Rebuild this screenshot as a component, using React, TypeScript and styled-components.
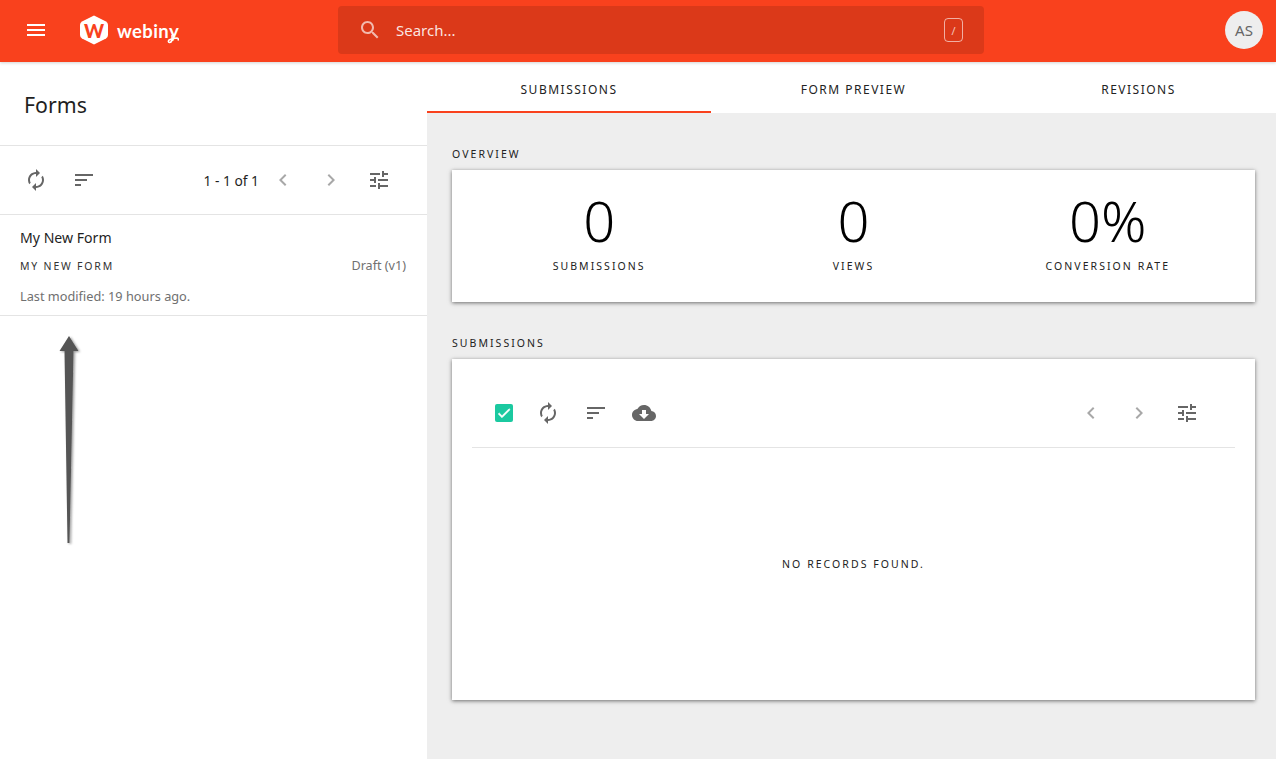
import { createGlobalStyle, styled } from "styled-components";

const GlobalStyle = createGlobalStyle`
  html, body { margin: 0; padding: 0; height: 100%; }
  body {
    background: #fff;
    color: #1a1a1a;
    font-family: "Noto Sans", "Open Sans", sans-serif;
    overflow: hidden;
  }
`;

const ICONS = {
  menu: "M3 18h18v-2H3v2zm0-5h18v-2H3v2zm0-7v2h18V6H3z",
  search:
    "M15.5 14h-.79l-.28-.27C15.41 12.59 16 11.11 16 9.5 16 5.91 13.09 3 9.5 3S3 5.91 3 9.5 5.91 16 9.5 16c1.61 0 3.09-.59 4.23-1.57l.27.28v.79l5 4.99L20.49 19l-4.99-5zm-6 0C7.01 14 5 11.99 5 9.5S7.01 5 9.5 5 14 7.01 14 9.5 11.99 14 9.5 14z",
  loop: "M12 6v3l4-4-4-4v3c-4.42 0-8 3.58-8 8 0 1.57.46 3.03 1.24 4.26L6.7 14.8c-.45-.83-.7-1.79-.7-2.8 0-3.31 2.69-6 6-6zm6.76 1.74L17.3 9.2c.44.84.7 1.79.7 2.8 0 3.31-2.69 6-6 6v-3l-4 4 4 4v-3c4.42 0 8-3.58 8-8 0-1.57-.46-3.03-1.24-4.26z",
  sort: "M3 18h6v-2H3v2zM3 6v2h18V6H3zm0 7h12v-2H3v2z",
  tune: "M3 17v2h6v-2H3zM3 5v2h10V5H3zm10 16v-2h8v-2h-8v-2h-2v6h2zM7 9v2H3v2h4v2h2V9H7zm14 4v-2H11v2h10zm-6-4h2V7h4V5h-4V3h-2v6z",
  left: "M15.41 7.41L14 6l-6 6 6 6 1.41-1.41L10.83 12z",
  right: "M10 6L8.59 7.41 13.17 12l-4.58 4.59L10 18l6-6z",
  cloud:
    "M19.35 10.04C18.67 6.59 15.64 4 12 4 9.11 4 6.6 5.64 5.35 8.04 2.34 8.36 0 10.91 0 14c0 3.31 2.69 6 6 6h13c2.76 0 5-2.24 5-5 0-2.64-2.05-4.78-4.65-4.96zM17 13l-5 5-5-5h3V9h4v4h3z",
  check: "M9 16.17L4.83 12l-1.42 1.41L9 19 21 7l-1.41-1.41z",
};

type IconName = keyof typeof ICONS;

const Icon = ({ name, className }: { name: IconName; className?: string }) => (
  <svg className={className} viewBox="0 0 24 24" width="24" height="24" fill="currentColor">
    <path d={ICONS[name]} />
  </svg>
);

const Page = styled.div`
  position: relative;
  width: 1276px;
  height: 759px;
  display: flex;
  flex-direction: column;
  overflow: hidden;
`;

const Header = styled.header`
  height: 62px;
  flex: none;
  box-sizing: border-box;
  padding-bottom: 2px;
  background: #f9411d;
  box-shadow: 0 1px 3px rgba(0, 0, 0, 0.18);
  position: relative;
  z-index: 2;
  display: flex;
  align-items: center;
  color: #fff;
`;

const MenuButton = styled.div`
  width: 24px;
  height: 24px;
  margin-left: 24px;
  display: flex;
`;

const Logo = styled.div`
  margin-left: 32px;
  width: 258px;
  display: flex;
  align-items: center;
  gap: 9px;
`;

const Hexagon = styled.div`
  position: relative;
  width: 28px;
  height: 30px;
  display: flex;
  align-items: center;
  justify-content: center;
  color: #f9411d;
  font-family: "Lato", sans-serif;
  font-size: 19px;
  font-weight: 900;
  line-height: 1;
  svg {
    position: absolute;
    inset: 0;
  }
  span {
    position: relative;
  }
`;

const LogoWord = styled.div`
  position: relative;
  font-family: "Lato", sans-serif;
  font-size: 18.5px;
  font-weight: 700;
  letter-spacing: 0.4px;
  line-height: 1;
  margin-top: 2px;
  svg {
    position: absolute;
    left: 46px;
    top: 10px;
  }
`;

const SearchBar = styled.div`
  width: 646px;
  height: 48px;
  background: #db3919;
  border-radius: 4px;
  display: flex;
  align-items: center;
  padding: 0 21px 0 20px;
  box-sizing: border-box;
  color: rgba(255, 255, 255, 0.65);
`;

const SearchText = styled.div`
  flex: 1;
  margin-left: 14px;
  font-size: 15px;
  color: rgba(255, 255, 255, 0.88);
`;

const SlashKey = styled.div`
  width: 19px;
  height: 24px;
  box-sizing: border-box;
  border: 1px solid rgba(255, 255, 255, 0.6);
  border-radius: 4px;
  display: flex;
  align-items: center;
  justify-content: center;
  font-size: 11px;
  color: rgba(255, 255, 255, 0.7);
`;

const Avatar = styled.div`
  margin-left: auto;
  margin-right: 13px;
  width: 38px;
  height: 38px;
  border-radius: 50%;
  background: #eee;
  color: #666;
  font-size: 15px;
  display: flex;
  align-items: center;
  justify-content: center;
`;

const Body = styled.div`
  flex: 1;
  display: flex;
  min-height: 0;
`;

const Sidebar = styled.aside`
  width: 427px;
  flex: none;
  background: #fff;
`;

const SidebarTitle = styled.div`
  height: 84px;
  box-sizing: border-box;
  padding: 2px 0 0 24px;
  display: flex;
  align-items: center;
  font-size: 21.3px;
  color: #1f1f1f;
  border-bottom: 1px solid #e4e4e4;
`;

const Toolbar = styled.div`
  height: 69px;
  box-sizing: border-box;
  display: flex;
  align-items: center;
  padding-left: 24px;
  border-bottom: 1px solid #e4e4e4;
`;

const ToolIcon = styled(Icon)<{ $muted?: boolean }>`
  flex: none;
  color: ${({ $muted }) => ($muted ? "#a8a8a8" : "#666")};
`;

const ToolGroup = styled.div<{ $gap: number }>`
  display: flex;
  align-items: center;
  gap: ${({ $gap }) => $gap}px;
`;

const Pager = styled.div`
  margin-left: auto;
  margin-right: 36px;
  display: flex;
  align-items: center;
  font-size: 13.8px;
  color: #1f1f1f;
  gap: 12px;
`;

const ListItem = styled.div`
  height: 101px;
  box-sizing: border-box;
  padding: 13px 21px 0 20px;
  border-bottom: 1px solid #e4e4e4;
`;

const ItemTitle = styled.div`
  font-size: 14.1px;
  line-height: 20px;
  color: #1f1f1f;
`;

const ItemMeta = styled.div`
  margin-top: 8px;
  display: flex;
  justify-content: space-between;
  align-items: center;
  line-height: 20px;
`;

const Slug = styled.div`
  font-size: 10.5px;
  letter-spacing: 1.8px;
  text-transform: uppercase;
  color: #333;
`;

const MutedText = styled.div`
  font-size: 12.6px;
  color: #707070;
`;

const Modified = styled(MutedText)`
  margin-top: 11px;
  line-height: 18px;
  font-size: 12.75px;
`;

const Arrow = styled.svg`
  position: absolute;
  left: 49.5px;
  top: 330px;
`;

const Main = styled.main`
  flex: 1;
  display: flex;
  flex-direction: column;
  background: #eee;
  min-width: 0;
`;

const Tabs = styled.nav`
  height: 51px;
  flex: none;
  background: #fff;
  display: grid;
  grid-template-columns: 284px 285px 285px;
`;

const Tab = styled.div<{ $active?: boolean }>`
  display: flex;
  align-items: center;
  justify-content: center;
  box-sizing: border-box;
  padding-top: 5px;
  font-size: 12px;
  letter-spacing: 1.5px;
  text-transform: uppercase;
  color: #222;
  border-bottom: 2px solid ${({ $active }) => ($active ? "#f9411d" : "transparent")};
`;

const Content = styled.div`
  padding: 34px 21px 0 25px;
`;

const SectionLabel = styled.div`
  font-size: 10.5px;
  line-height: 14px;
  letter-spacing: 2.05px;
  text-transform: uppercase;
  color: #222;
  margin-bottom: 9px;
`;

const Card = styled.section`
  background: #fff;
  box-shadow: 0 1px 4px rgba(0, 0, 0, 0.55);
`;

const StatsCard = styled(Card)`
  height: 132px;
  box-sizing: border-box;
  padding: 18px 20px 0;
  display: grid;
  grid-template-columns: repeat(3, 1fr);
  margin-bottom: 34px;
`;

const Stat = styled.div`
  display: flex;
  flex-direction: column;
  align-items: center;
`;

const StatValue = styled.div`
  font-size: 56px;
  font-weight: 350;
  line-height: 64px;
  color: #000;
`;

const StatLabel = styled.div`
  margin-top: 6px;
  font-size: 10.5px;
  line-height: 16px;
  letter-spacing: 2.05px;
  text-transform: uppercase;
  color: #222;
`;

const SubmissionsCard = styled(Card)`
  height: 341px;
  box-sizing: border-box;
  padding: 0 20px;
`;

const SubmissionsBar = styled.div`
  height: 89px;
  box-sizing: border-box;
  display: flex;
  align-items: center;
  justify-content: space-between;
  padding: 20px 36px 0 23px;
  border-bottom: 1px solid #e4e4e4;
`;

const Checkbox = styled.div`
  width: 18px;
  height: 18px;
  border-radius: 2px;
  background: #1bc9a0;
  color: #fff;
  display: flex;
  align-items: center;
  justify-content: center;
  margin-right: -1px;
  svg {
    width: 16px;
    height: 16px;
    stroke: currentColor;
    stroke-width: 1;
  }
`;

const Empty = styled.div`
  height: 231px;
  display: flex;
  align-items: center;
  justify-content: center;
  font-size: 10.5px;
  letter-spacing: 2.05px;
  text-transform: uppercase;
  color: #222;
`;

export default function App() {
  return (
    <Page>
      <GlobalStyle />
      <Header>
        <MenuButton>
          <Icon name="menu" />
        </MenuButton>
        <Logo>
          <Hexagon>
            <svg viewBox="0 0 28 30" width="28" height="30" fill="#fff">
              <path d="M14 0.5 L26 6.5 Q28 7.5 28 10 V20 Q28 22.5 26 23.5 L14 29.5 L2 23.5 Q0 22.5 0 20 V10 Q0 7.5 2 6.5 Z" />
            </svg>
            <span>W</span>
          </Hexagon>
          <LogoWord>
            webiny
            <svg viewBox="0 0 16 12" width="16" height="12" fill="none" stroke="#fff" strokeWidth="1.5">
              <path d="M9 3 V7 Q9 10.5 6.5 10.5 Q4.5 10 6 8 Q9.5 6 14 6 Q16 6.5 15 8.5" />
            </svg>
          </LogoWord>
        </Logo>
        <SearchBar>
          <Icon name="search" />
          <SearchText>Search...</SearchText>
          <SlashKey>/</SlashKey>
        </SearchBar>
        <Avatar>AS</Avatar>
      </Header>
      <Body>
        <Sidebar>
          <SidebarTitle>Forms</SidebarTitle>
          <Toolbar>
            <ToolGroup $gap={24}>
              <ToolIcon name="loop" />
              <ToolIcon name="sort" />
            </ToolGroup>
            <Pager>
              1 - 1 of 1
              <ToolGroup $gap={24}>
                <ToolIcon name="left" $muted />
                <ToolIcon name="right" $muted />
                <ToolIcon name="tune" />
              </ToolGroup>
            </Pager>
          </Toolbar>
          <ListItem>
            <ItemTitle>My New Form</ItemTitle>
            <ItemMeta>
              <Slug>My New Form</Slug>
              <MutedText>Draft (v1)</MutedText>
            </ItemMeta>
            <Modified>Last modified: 19 hours ago.</Modified>
          </ListItem>
        </Sidebar>
        <Main>
          <Tabs>
            <Tab $active>Submissions</Tab>
            <Tab>Form Preview</Tab>
            <Tab>Revisions</Tab>
          </Tabs>
          <Content>
            <SectionLabel>Overview</SectionLabel>
            <StatsCard>
              <Stat>
                <StatValue>0</StatValue>
                <StatLabel>Submissions</StatLabel>
              </Stat>
              <Stat>
                <StatValue>0</StatValue>
                <StatLabel>Views</StatLabel>
              </Stat>
              <Stat>
                <StatValue>0%</StatValue>
                <StatLabel>Conversion rate</StatLabel>
              </Stat>
            </StatsCard>
            <SectionLabel>Submissions</SectionLabel>
            <SubmissionsCard>
              <SubmissionsBar>
                <ToolGroup $gap={24}>
                  <Checkbox>
                    <Icon name="check" />
                  </Checkbox>
                  <ToolIcon name="loop" />
                  <ToolIcon name="sort" />
                  <ToolIcon name="cloud" />
                </ToolGroup>
                <ToolGroup $gap={24}>
                  <ToolIcon name="left" $muted />
                  <ToolIcon name="right" $muted />
                  <ToolIcon name="tune" />
                </ToolGroup>
              </SubmissionsBar>
              <Empty>No records found.</Empty>
            </SubmissionsCard>
          </Content>
        </Main>
      </Body>
      <Arrow viewBox="0 0 40 220" width="40" height="220">
        <defs>
          <filter id="arrow-shadow" x="-30%" y="-5%" width="160%" height="110%">
            <feDropShadow dx="1.5" dy="1" stdDeviation="1" floodColor="#000" floodOpacity="0.4" />
          </filter>
        </defs>
        <path
          d="M17.5 213 L14.5 21 L9.5 21 L19 6 L28.5 21 L23.5 21 L19.5 213 Z"
          fill="#555"
          filter="url(#arrow-shadow)"
        />
      </Arrow>
    </Page>
  );
}
